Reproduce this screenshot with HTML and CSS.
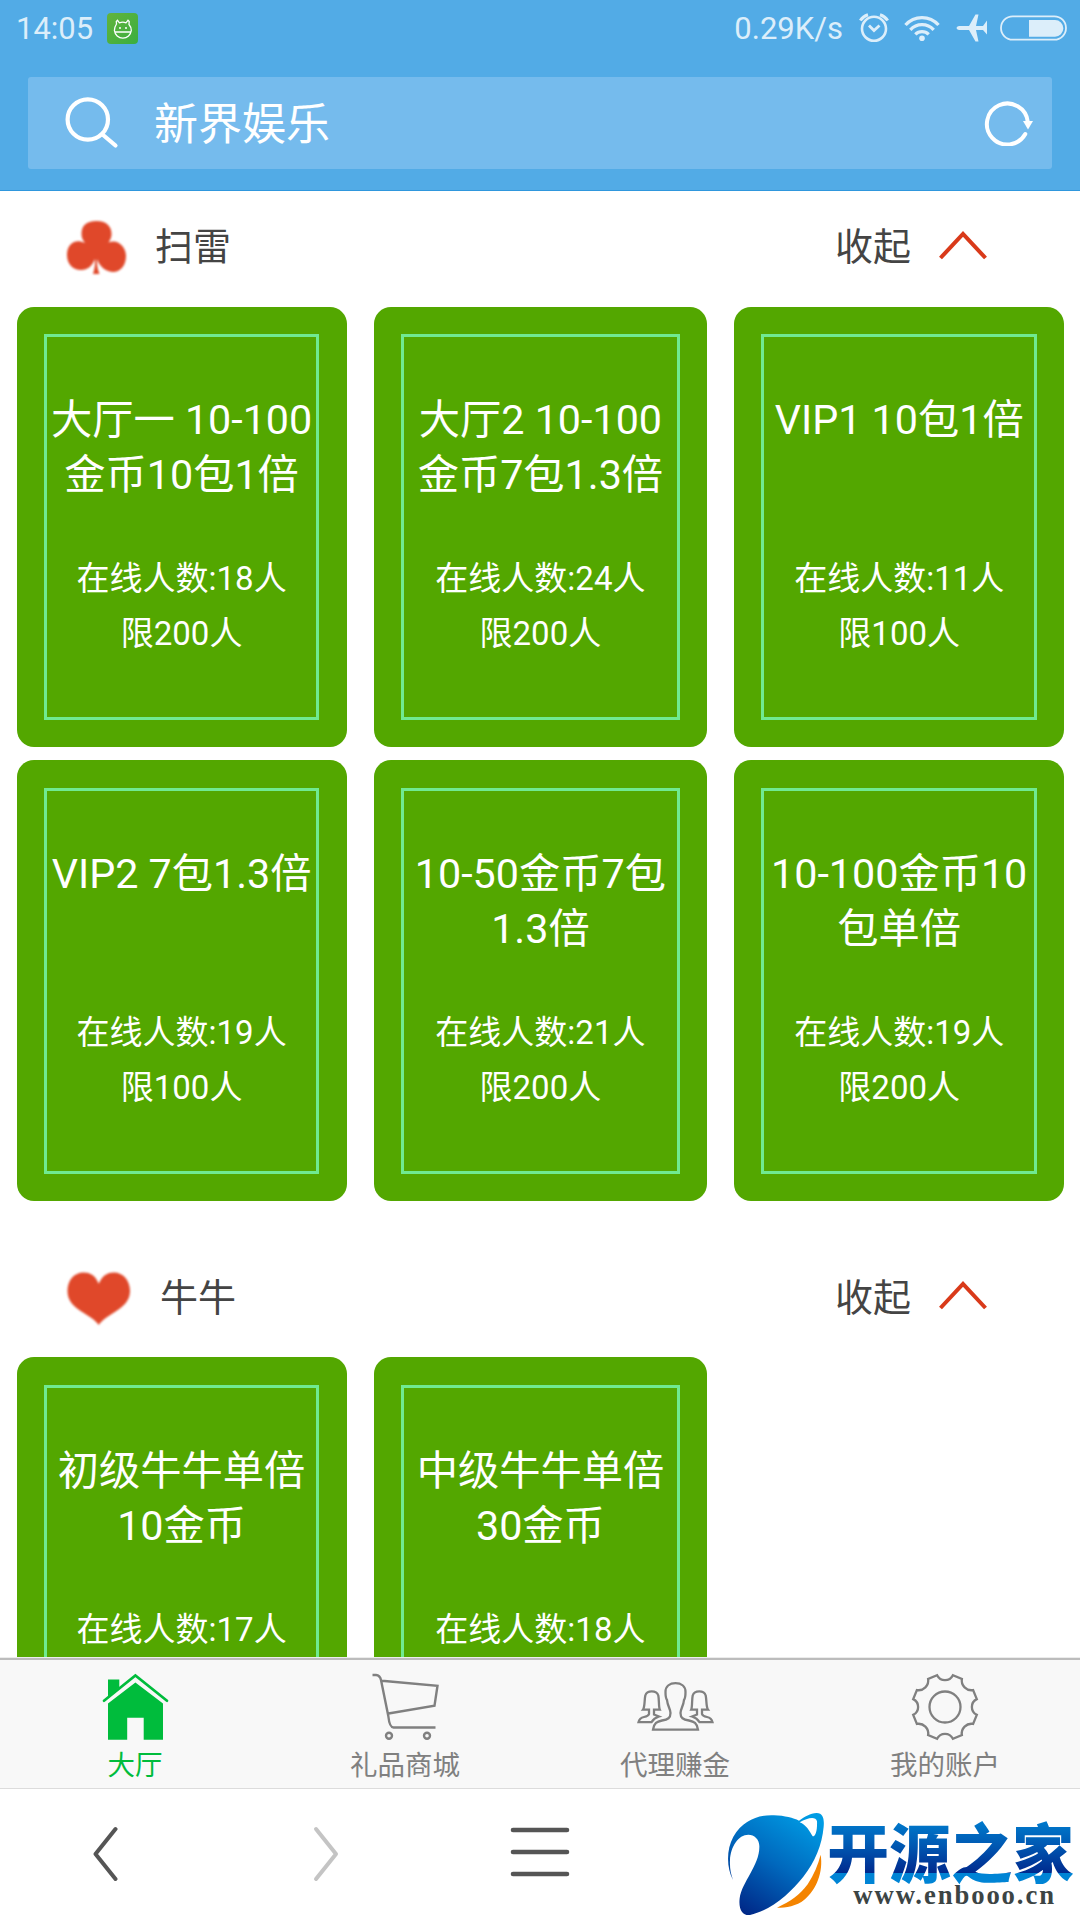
FILE: index.html
```html
<!DOCTYPE html>
<html lang="zh-CN">
<head>
<meta charset="utf-8">
<title>新界娱乐</title>
<link rel="stylesheet" href="styles.css">
</head>
<body>
<header class="top">
  <div class="status">
    <span class="clock">14:05</span>
    <svg class="app-badge" width="31" height="31" viewBox="0 0 31 31">
      <defs><linearGradient id="badge" x1="0" y1="0" x2="1" y2="1"><stop offset="0" stop-color="#63b33c"/><stop offset="1" stop-color="#3aae40"/></linearGradient></defs>
      <rect width="31" height="31" rx="4" fill="url(#badge)"/>
      <g fill="none" stroke="#fff" stroke-width="1.3"><path d="M9.5 11 9.3 8.5 10.5 7.3 12.4 9.8Q15.800 8.600 19 9.800L21 7.300 22.200 8.500 22 11.500Q24.300 14 24.300 17.500A8.500 8.500 0 0 1 7.400 17.500Q7.400 14 9.500 11ZM7.500 19H24"/></g>
      <circle cx="13" cy="15" r="1" fill="#fff"/><circle cx="19" cy="15" r="1" fill="#fff"/>
    </svg>
    <span class="speed">0.29K/s</span>
    <svg class="alarm" width="30" height="30" viewBox="0 0 30 30" fill="none" stroke="#dceefa">
      <circle cx="15" cy="15.800" r="12" stroke-width="2.600"/><path d="M10 12.500 15 17.500 20.500 12.500" stroke-width="2.800"/><path d="M1.300 7.500Q4 3.300 9 1.700M28.700 7.500Q26 3.300 21 1.700" stroke-width="3"/>
    </svg>
    <svg class="wifi" width="36" height="27" viewBox="0 0 36 27" fill="none" stroke="#dceefa" stroke-width="3.300">
      <path d="M1.500 10A22 22 0 0 1 34.500 10M6.300 14.800A16 16 0 0 1 29.700 14.800M11.300 19.300A9.500 9.500 0 0 1 24.700 19.300"/><circle cx="18" cy="23.300" r="2.800" fill="#dceefa" stroke="none"/>
    </svg>
    <svg class="plane" width="32" height="28" viewBox="0 0 32 28">
      <path d="M3 12H13L19.500 0.500H22.500L20 12H27L31 6.500V20.500L27 16H20L22.500 27.500H19.500L13 16H3Q0.500 15.500 0.500 14T3 12Z" fill="#dceefa"/>
    </svg>
    <svg class="battery" width="67" height="26" viewBox="0 0 67 26">
      <rect x="1" y="1.300" width="65" height="23.400" rx="11.700" fill="none" stroke="#dceefa" stroke-width="1.800"/>
      <path d="M29 5H55A8.300 8.300 0 0 1 55 21.700H29Z" fill="#dceefa"/>
    </svg>
  </div>
  <div class="search">
    <svg class="lens" width="56" height="56" viewBox="0 0 56 56" fill="none" stroke="#fff" stroke-width="4.200" stroke-linecap="round"><circle cx="24.800" cy="24.500" r="20.200"/><path d="M39.500 39.500 52.500 50.500"/></svg>
    <span class="query">新界娱乐</span>
    <svg class="reload" width="50" height="46" viewBox="0 0 50 46" fill="none" stroke="#fff" stroke-width="4" stroke-linecap="round"><path d="M41.300 34A20.500 20.500 0 1 1 43.800 22"/><path d="M39 21H49L44 29.500Z" fill="#fff" stroke="none"/></svg>
  </div>
</header>

<main class="hall">
  <section class="group">
    <div class="group-head">
      <svg class="suit" width="60" height="54" viewBox="0 0 60 54" fill="#e0482a"><path d="M30.500 1C42 1 46 8 45.500 15 45.300 18 44 20 42.500 22.500 52 18.500 60 27 60 36 60 46 54 52 47 52 38 51.500 33 45 31 39 30.500 45 32 50 33.500 54H27C28.500 49 29.500 44 29 39 26 46 22 50 15 50 7 50 1 44 1 35 1 24 9 18 19 23 17 20 15.500 18 15.500 14 15.500 6 20 1 30.500 1Z"/></svg>
      <h2 class="group-title">扫雷</h2>
      <span class="fold">收起</span>
      <svg class="chevron" width="48" height="29" viewBox="0 0 48 29" fill="none" stroke="#d93a1a" stroke-width="4"><path d="M1.500 27 24 3 46.500 27"/></svg>
    </div>
    <div class="cards">
      <a class="card"><div class="frame"><p class="name">大厅一 10-100<br>金币10包1倍</p><p class="count">在线人数:18人<br>限200人</p></div></a>
      <a class="card"><div class="frame"><p class="name">大厅2 10-100<br>金币7包1.3倍</p><p class="count">在线人数:24人<br>限200人</p></div></a>
      <a class="card"><div class="frame"><p class="name">VIP1 10包1倍</p><p class="count">在线人数:11人<br>限100人</p></div></a>
      <a class="card"><div class="frame"><p class="name">VIP2 7包1.3倍</p><p class="count">在线人数:19人<br>限100人</p></div></a>
      <a class="card"><div class="frame"><p class="name">10-50金币7包<br>1.3倍</p><p class="count">在线人数:21人<br>限200人</p></div></a>
      <a class="card"><div class="frame"><p class="name">10-100金币10<br>包单倍</p><p class="count">在线人数:19人<br>限200人</p></div></a>
    </div>
  </section>
  <section class="group">
    <div class="group-head">
      <svg class="suit" width="65" height="56" viewBox="0 0 66 56" fill="#e0482a"><path d="M33.200 13.500C37 5 42 2 48.500 2 58 2 65 10 65 21 65 31 58 37 50 42 42 47 37 50 33.200 55.500 29.500 50 24 47 16 42 8 37 1.500 31 1.500 21 1.500 10 8 2 18 2 24.500 2 30 5 33.200 13.500Z"/></svg>
      <h2 class="group-title">牛牛</h2>
      <span class="fold">收起</span>
      <svg class="chevron" width="48" height="29" viewBox="0 0 48 29" fill="none" stroke="#d93a1a" stroke-width="4"><path d="M1.500 27 24 3 46.500 27"/></svg>
    </div>
    <div class="cards">
      <a class="card"><div class="frame"><p class="name">初级牛牛单倍<br>10金币</p><p class="count">在线人数:17人</p></div></a>
      <a class="card"><div class="frame"><p class="name">中级牛牛单倍<br>30金币</p><p class="count">在线人数:18人</p></div></a>
    </div>
  </section>
</main>

<nav class="tabs">
  <a class="tab active">
    <svg width="67" height="68" viewBox="0 0 67 68"><path d="M6 24V6.500H17.300V14.500ZM33.400 9.500 61 30.500V66.700H41.700V44.700H25.200V66.700H6V30.500Z" fill="#00bc3c"/><path d="M2 27.700 33.400 2.500 65 27.700" fill="none" stroke="#00bc3c" stroke-width="2.700" stroke-linecap="round"/></svg>
    <span>大厅</span>
  </a>
  <a class="tab">
    <svg class="cart" width="67" height="68" viewBox="0 0 67 68" fill="none" stroke="#808080" stroke-width="2.400"><path d="M0.500 2H4Q8 2.300 9 7L16.300 43Q17.500 54.500 21.500 54.500H63.500M9.800 7.700 65.500 12.800 62.500 32.700 16.500 40.500"/><circle cx="17" cy="62.800" r="3"/><circle cx="55" cy="62.800" r="3"/></svg>
    <span>礼品商城</span>
  </a>
  <a class="tab">
    <svg width="77" height="68" viewBox="0 -9 77 68" fill="none" stroke="#808080" stroke-width="2.300"><path d="M16 47.700C17 41 20 39.500 25 38.500 31 37.500 33.500 36 33.500 31 33.500 27 30.500 24 30 18 28.500 16 28.500 13 28.500 10 28.500 4 33 1.200 38.500 1.200S48.500 4 48.500 10C48.500 13 48.500 16 47 18 46.500 24 43.500 27 43.500 31 43.500 36 46 37.500 52 38.500 57 39.500 60 41 61 47.700Z"/><path id="side" d="M22 34.500 17 32.500V27.700H22.800C21.500 25 22.300 18 21.300 13.500 19.500 8 10 8 8.300 13.500 7.300 18 8 25 6 27.700H12V32Q11.500 34 7 35 2.500 36 1.500 40.200H14.500Q17 36 22 34.500Z"/><use href="#side" transform="matrix(-1 0 0 1 77 0)"/></svg>
    <span>代理赚金</span>
  </a>
  <a class="tab">
    <svg width="68" height="68" viewBox="-34 -34 68 68" fill="none" stroke="#808080" stroke-width="2.300"><path d="M-7.900-31.800A8.800 8.800 0 0 0 7.900-31.800L16.900-28.100A9.700 9.700 0 0 0 28.100-16.900L31.800-7.900A8.800 8.800 0 0 0 31.800 7.900L28.100 16.900A9.700 9.700 0 0 0 16.900 28.100L7.900 31.800A8.800 8.800 0 0 0-7.900 31.800L-16.900 28.100A9.700 9.700 0 0 0-28.100 16.900L-31.800 7.900A8.800 8.800 0 0 0-31.800-7.900L-28.100-16.900A9.700 9.700 0 0 0-16.900-28.100Z"/><circle r="15.500"/></svg>
    <span>我的账户</span>
  </a>
</nav>

<footer class="browser-bar">
  <svg class="back" width="26" height="56" viewBox="0 0 26 56" fill="none" stroke="#555" stroke-width="4" stroke-linecap="round" stroke-linejoin="round"><path d="M22.500 3 2.500 28 22.500 53"/></svg>
  <svg class="forward" width="26" height="56" viewBox="0 0 26 56" fill="none" stroke="#c4c4c4" stroke-width="4" stroke-linecap="round" stroke-linejoin="round"><path d="M3 3 23 28 3 53"/></svg>
  <svg class="menu" width="60" height="50" viewBox="0 0 60 50" stroke="#555" stroke-width="4.600" stroke-linecap="round"><path d="M3 3H57M3 25H57M3 47H57"/></svg>
  <svg class="brand" width="380" height="130" viewBox="0 0 1140 390">
    <defs>
      <linearGradient id="globe" x1="0.800" y1="0" x2="0.200" y2="1"><stop offset="0" stop-color="#009ce4"/><stop offset="0.500" stop-color="#0068bd"/><stop offset="1" stop-color="#002887"/></linearGradient>
      <linearGradient id="word" gradientUnits="userSpaceOnUse" x1="0" y1="92" x2="0" y2="280"><stop offset="0" stop-color="#007bcd"/><stop offset="0.400" stop-color="#0058b2"/><stop offset="0.830" stop-color="#002a8e"/><stop offset="0.840" stop-color="#0084d5"/><stop offset="1" stop-color="#0084d5"/></linearGradient>
    </defs>
    <path fill="url(#globe)" fill-rule="evenodd" d="M99 270C80 235 78 180 100 140 130 90 175 74 222 76 255 77 280 84 297 92 315 80 330 70 350 69 370 69 373 88 371 110 366 165 345 215 310 260 270 310 215 360 150 375 128 378 115 358 119 325 126 275 180 225 178 168 178 148 163 134 145 134 115 134 92 170 90 210 89 235 92 250 99 270ZM299 97C318 104 330 125 338 139 348 139 352 118 351 94 347 78 322 84 299 97Z"/>
    <path fill="#f48400" d="M362 194C370 245 350 298 313 329 290 348 258 353 231 353 270 335 300 315 323 283 342 253 354 225 362 194Z"/>
    <text class="brand-name" x="382" y="262" textLength="740" lengthAdjust="spacingAndGlyphs" fill="url(#word)">开源之家</text>
    <text class="brand-url" x="460" y="343" textLength="602" lengthAdjust="spacing" fill="#3c4444">www.enbooo.cn</text>
  </svg>
</footer>
</body>
</html>
```
FILE: styles.css
```css
* { box-sizing: border-box; }

body {
  margin: 0;
  width: 1080px;
  height: 1920px;
  display: flex;
  flex-direction: column;
  overflow: hidden;
  background: #fff;
  font-family: Roboto, "Noto Sans CJK SC", sans-serif;
}

svg { display: block; flex: none; }
h2, p { margin: 0; font-weight: 400; }

.top {
  flex: none;
  height: 191px;
  padding: 0 28px;
  background: #52abe6;
  border-bottom: 1px solid #2f97dd;
}

.status {
  height: 77px;
  margin: 0 -15px 0 -12px;
  padding-bottom: 21px;
  display: flex;
  align-items: center;
  color: #dceefa;
  font-size: 31px;
  line-height: 56px;
}
.clock { width: 91px; padding-top: 1px; }
.speed { margin-left: auto; padding-top: 2px; }
.alarm { margin-left: 16px; }
.wifi { margin-left: 15px; }
.plane { margin-left: 16px; }
.battery { margin: 0 0 0 12px; }

.search {
  height: 92px;
  padding: 0 18px 0 35px;
  display: flex;
  align-items: center;
  border-radius: 3px;
  background: #75bbed;
  color: #fff;
}
.query { margin-left: 35px; padding-top: 4px; font-size: 44px; line-height: 88px; }
.reload { margin: 0 0 1px auto; }

.hall { flex: 1; min-height: 0; overflow: hidden; }
.group { margin-bottom: 41px; }

.group-head {
  height: 115.500px;
  padding: 0 93px 7px 66px;
  display: flex;
  align-items: center;
  color: #444;
  font-size: 38px;
  line-height: 56px;
}
.suit { position: relative; top: 2px; filter: blur(0.900px); }
.group-title { margin-left: 29px; padding-top: 4px; font-size: inherit; }
.fold { margin-left: auto; padding-top: 4px; }
.chevron { margin-left: 28px; }

.cards {
  padding-left: 16.600px;
  display: grid;
  grid-template-columns: 330px 333px 330px;
  grid-auto-rows: 440.200px;
  gap: 13.700px 27.300px;
}
.card {
  padding: 27.700px 27.300px;
  border-radius: 17px;
  background: #53a700;
}
.frame {
  height: 385.500px;
  padding-top: 56px;
  border: 3px solid #70ea91;
  color: #fff;
  text-align: center;
  white-space: nowrap;
}
.name { height: 110px; font-size: 41.250px; line-height: 55px; }
.count { margin-top: 48px; font-size: 33px; line-height: 55px; }

.tabs {
  flex: none;
  height: 132px;
  display: grid;
  grid-template-columns: repeat(4, 1fr);
  border-top: 1px solid #ececec;
  border-bottom: 1px solid #dcdcdc;
  background: #f8f8f8;
  box-shadow: inset 0 2px #bcbcbc;
}
.tab {
  padding-top: 15px;
  display: flex;
  flex-direction: column;
  align-items: center;
  color: #808080;
  font-size: 27.500px;
  line-height: 44px;
}
.tab span { padding-top: 3px; line-height: 43px; }
.active { color: #00bc3c; }

.browser-bar {
  flex: none;
  position: relative;
  height: 131px;
  padding: 37px 0 0 93px;
  display: flex;
  align-items: flex-start;
}
.forward { margin-left: 194px; }
.menu { margin: 1px 0 0 171px; }
.brand { position: absolute; right: 0; bottom: 0; }
.brand-name { font: 900 190px "Noto Sans CJK SC", sans-serif; }
.brand-url { font: bold 80px "Liberation Serif", serif; }
```
